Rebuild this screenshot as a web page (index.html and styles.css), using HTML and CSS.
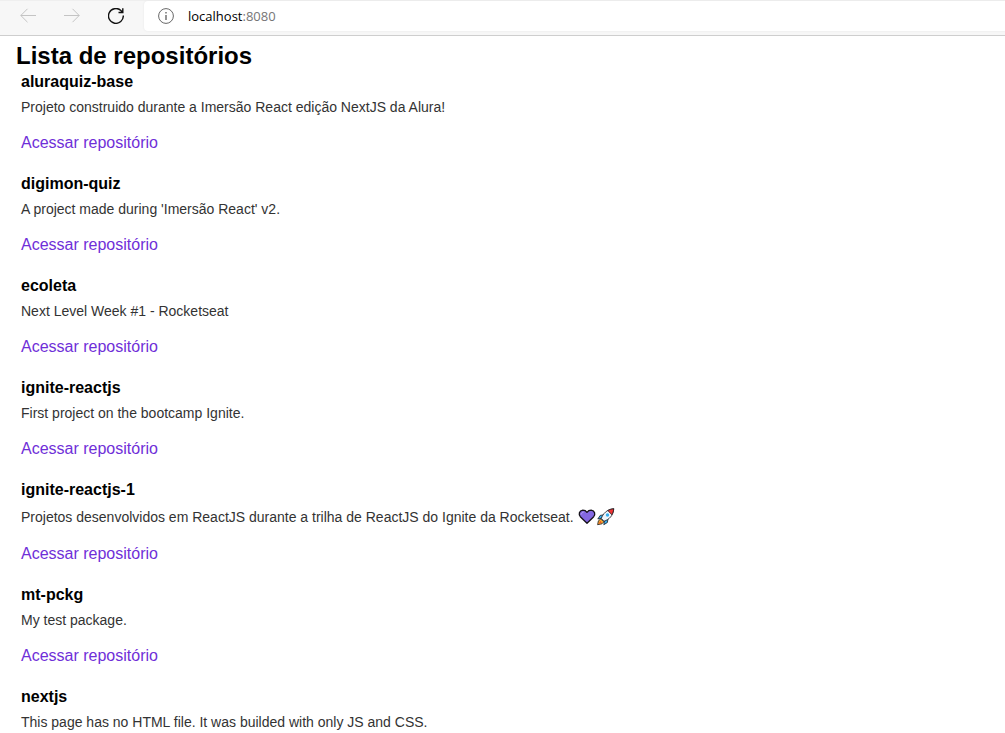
FILE: index.html
```html
<!DOCTYPE html>
<html lang="pt-BR">
<head>
<meta charset="utf-8">
<meta name="viewport" content="width=device-width, initial-scale=1">
<title>Lista de repositórios</title>
<link rel="stylesheet" href="styles.css">
</head>
<body>
<header class="toolbar">
  <nav class="toolbar-nav" aria-label="Navegação">
    <button class="nav-button" type="button" aria-label="Voltar" disabled>
      <svg class="icon" viewBox="0 0 16 16"><path d="M16 7.5H.8M7.5.8.8 7.5l6.7 6.7"/></svg>
    </button>
    <button class="nav-button" type="button" aria-label="Avançar" disabled>
      <svg class="icon" viewBox="0 0 16 16"><path d="M0 7.5h15.2M8.500.8l6.700 6.700-6.700 6.700"/></svg>
    </button>
    <button class="nav-button nav-reload" type="button" aria-label="Atualizar">
      <svg class="icon" viewBox="0 0 16 16"><path d="M15.300 7.500A7.400 7.400 0 1 1 12.600 2.200L14.800 4.500M14.800.2v4.300h-4.300"/></svg>
    </button>
  </nav>
  <div class="address">
    <button class="info-button" type="button" aria-label="Informações do site">
      <svg class="icon" viewBox="0 0 16 16"><circle cx="8" cy="8" r="7.400"/><path class="info-mark" d="M8 7v5M8 4v1.500"/></svg>
    </button>
    <div class="url" role="textbox" contenteditable="true" spellcheck="false" aria-label="Endereço">localhost<span class="port">:8080</span></div>
  </div>
</header>
<main class="page">
  <h1 class="page-title">Lista de repositórios</h1>
  <ul class="repo-list">
    <li class="repo">
      <strong class="repo-name">aluraquiz-base</strong>
      <p class="repo-text">Projeto construido durante a Imersão React edição NextJS da Alura!</p>
      <a class="repo-link" href="#">Acessar repositório</a>
    </li>
    <li class="repo">
      <strong class="repo-name">digimon-quiz</strong>
      <p class="repo-text">A project made during 'Imersão React' v2.</p>
      <a class="repo-link" href="#">Acessar repositório</a>
    </li>
    <li class="repo">
      <strong class="repo-name">ecoleta</strong>
      <p class="repo-text">Next Level Week #1 - Rocketseat</p>
      <a class="repo-link" href="#">Acessar repositório</a>
    </li>
    <li class="repo">
      <strong class="repo-name">ignite-reactjs</strong>
      <p class="repo-text">First project on the bootcamp Ignite.</p>
      <a class="repo-link" href="#">Acessar repositório</a>
    </li>
    <li class="repo">
      <strong class="repo-name">ignite-reactjs-1</strong>
      <p class="repo-text">Projetos desenvolvidos em ReactJS durante a trilha de ReactJS do Ignite da Rocketseat. <svg class="emoji" viewBox="0 0 19 19" role="img" aria-label="Coração roxo"><path d="M10 16.300 3.300 9.700C1.400 7.500 2 3.600 5.800 3.200c1.900 0 3.300.8 4.200 2.100.9-1.300 2.300-2.100 4.200-2.100 3.800.4 4.400 4.300 2.500 6.500z" fill="#8468e2" stroke="#141018" stroke-width="1.300" stroke-linejoin="round"/><path d="M4.400 7c.2-1 .8-1.600 1.800-1.700" fill="none" stroke="#b7a4f4" stroke-linecap="round"/></svg><svg class="emoji" viewBox="0 0 19 19" role="img" aria-label="Foguete"><g stroke="#1b1b20" stroke-width=".8" stroke-linejoin="round"><path d="M4.800 12 2.400 13.800l-.8 3.900 4.400-.9 1.900-2z" fill="#f8b02f"/><path d="M8 7.800 4.200 8.400 1.800 12l4-.8zM12 11.500l-.6 4-3.600 2.200.7-4z" fill="#35aef0"/><path d="M5.300 11.400C7 6.800 10.500 2.500 17.700 1.700 17.500 8.500 13 12.700 8 14.200z" fill="#eef3f8"/><path d="M11.800 3.500c1.700-1 3.600-1.600 5.900-1.800-.1 2.400-.8 4.300-1.900 6z" fill="#f03434"/></g><circle cx="11.500" cy="8" r="1.700" fill="#35aef0"/><path d="m2.500 16.900 1.900-3 1.500 1.500z" fill="#ee4b28"/></svg></p>
      <a class="repo-link" href="#">Acessar repositório</a>
    </li>
    <li class="repo">
      <strong class="repo-name">mt-pckg</strong>
      <p class="repo-text">My test package.</p>
      <a class="repo-link" href="#">Acessar repositório</a>
    </li>
    <li class="repo">
      <strong class="repo-name">nextjs</strong>
      <p class="repo-text">This page has no HTML file. It was builded with only JS and CSS.</p>
    </li>
  </ul>
</main>
</body>
</html>
```
FILE: styles.css
```css
* {
  box-sizing: border-box;
  margin: 0;
  padding: 0;
}

body {
  background: #fff;
  color: #000;
  font: 16px/18px "Liberation Sans", Arial, sans-serif;
}

button {
  border: 0;
  background: none;
  color: inherit;
}

.toolbar {
  display: flex;
  padding-bottom: 4px;
  background: #f7f7f7;
  border-top: 1px solid #efefef;
  border-bottom: 1px solid #cecece;
}

.toolbar-nav {
  display: flex;
  align-items: center;
  gap: 28px;
  padding: 0 20px;
}

.nav-button,
.info-button {
  display: flex;
}

.nav-button {
  color: #c4c4c4;
}

.nav-reload {
  color: #111;
}

.icon {
  width: 16px;
  height: 16px;
  fill: none;
  stroke: currentColor;
  stroke-width: 1;
}

.nav-reload .icon {
  stroke-width: 1.4;
}

.info-mark {
  stroke-width: 1.4;
}

.address {
  display: flex;
  flex: 1;
  align-items: center;
  gap: 14px;
  padding: 6px 14px;
  background: #fff;
  border-radius: 4px 0 0 4px;
  box-shadow: 0 0 2px #e4e4e4;
}

.info-button {
  color: #686868;
}

.url {
  flex: 1;
  font: 13px/18px "Open Sans", "Noto Sans", sans-serif;
  outline: 0;
}

.port {
  color: #767676;
}

.page {
  padding: 6px 16px;
}

.page-title {
  font-size: 24px;
  line-height: 28px;
}

.repo-list {
  padding: 3px 5px;
  list-style: none;
}

.repo {
  margin-bottom: 23px;
}

.repo-name {
  display: block;
}

.repo-text {
  margin: 8px 0 19px;
  color: #333;
  font-size: 14px;
  line-height: 16px;
}

.emoji {
  width: 19px;
  height: 19px;
  vertical-align: -4px;
}

.repo-link {
  display: block;
  width: fit-content;
  color: #6f2fd8;
  text-decoration: none;
}
```
